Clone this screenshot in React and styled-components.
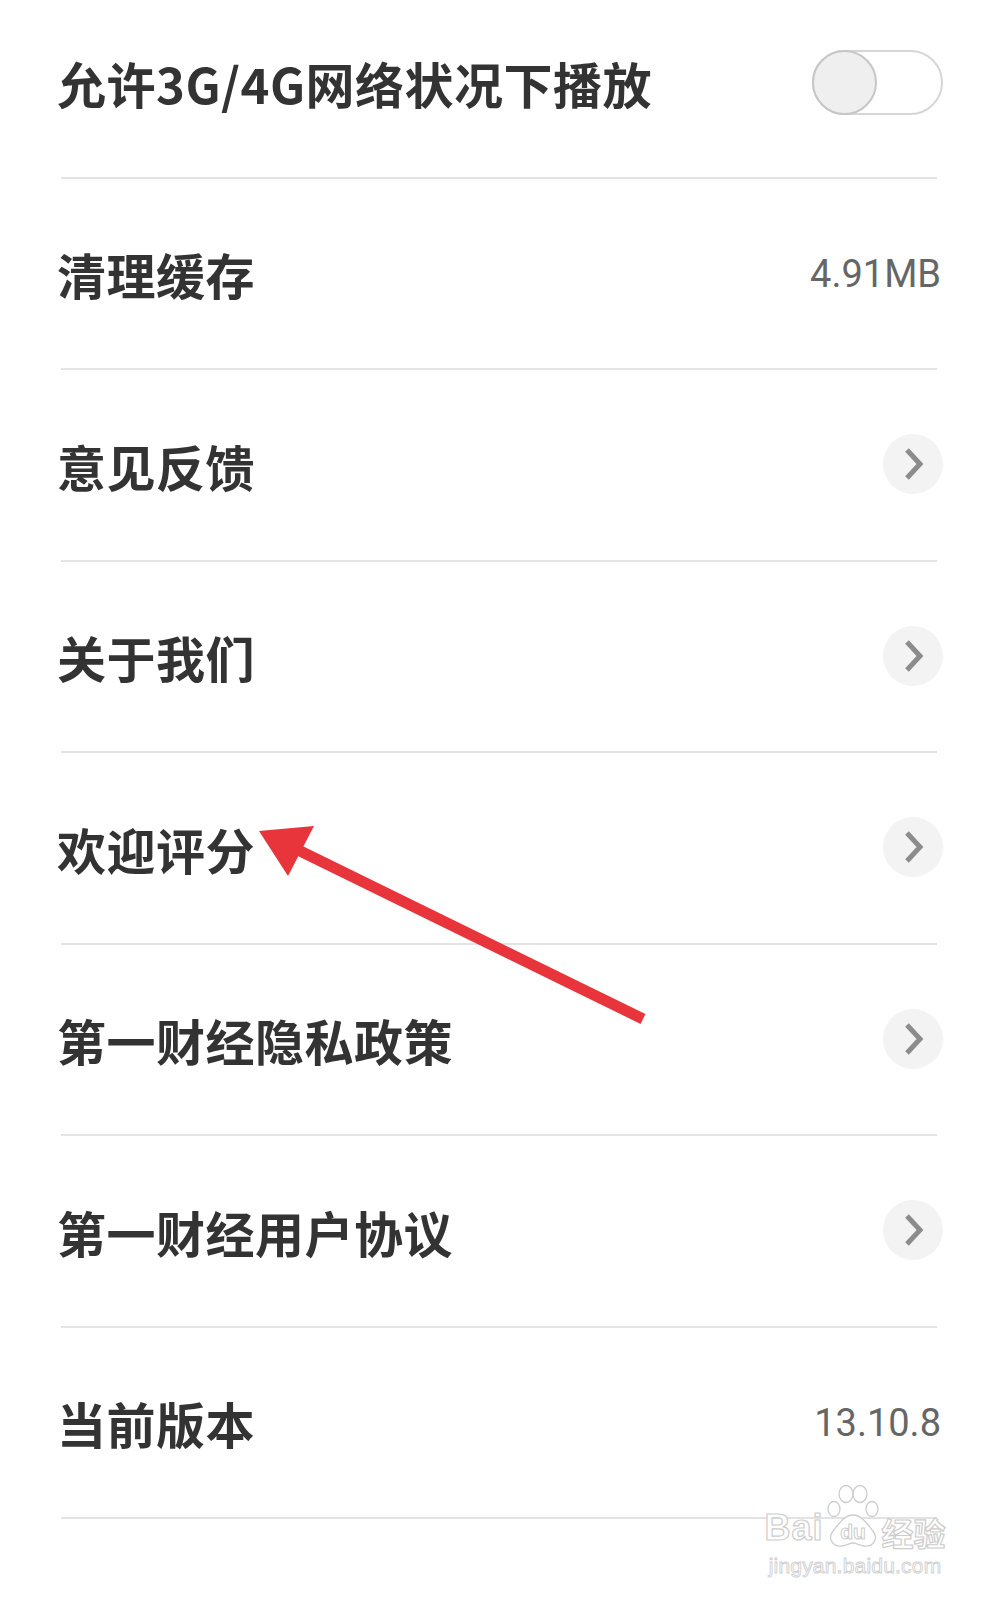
import React from "react"
import styled, { createGlobalStyle } from "styled-components"

const GlobalStyle = createGlobalStyle`
    html, body {
        margin: 0;
        padding: 0;
        background: #ffffff;
    }
    body {
        font-family: "Noto Sans CJK SC", "Noto Sans", sans-serif;
    }
`

const Page = styled.div`
    position: relative;
    width: 999px;
    height: 1600px;
    overflow: hidden;
    background: #fff;
`
const List = styled.div`
    display: flex;
    flex-direction: column;
    padding: 0 56px 0 57px;
`
const Row = styled.div`
    display: flex;
    align-items: center;
    justify-content: space-between;
    height: ${({ h }) => h}px;
    padding-top: ${({ shift }) => shift || 0}px;
    padding-bottom: ${({ lift }) => lift || 0}px;
    box-sizing: border-box;
`
const Label = styled.span`
    font-family: "Noto Sans CJK SC", sans-serif;
    font-weight: 700;
    font-size: 49px;
    color: #333;
    letter-spacing: 0.5px;
    line-height: 1;
`
const Value = styled.span`
    font-family: Roboto, "Liberation Sans", sans-serif;
    font-size: 38px;
    color: #666;
    line-height: 1;
    margin-right: 2px;
`
const Divider = styled.div`
    height: 2px;
    background: #e3e3e3;
    margin: 0 6px 0 4px;
`
const Toggle = styled.div`
    display: flex;
    align-items: center;
    width: 131px;
    height: 65px;
    box-sizing: border-box;
    border: 2px solid #d6d6d6;
    border-radius: 33px;
    background: #fff;
    margin-top: 0;
`
const Knob = styled.div`
    width: 65px;
    height: 65px;
    box-sizing: border-box;
    margin-left: -2px;
    border-radius: 50%;
    border: 2px solid #c6c6c6;
    background: #efefef;
`
const ChevronCircle = styled.div`
    display: flex;
    align-items: center;
    justify-content: center;
    width: 60px;
    height: 60px;
    border-radius: 50%;
    background: #f3f3f3;
    margin-top: -2px;
`
const Overlay = styled.svg`
    position: absolute;
    left: 0;
    top: 0;
    pointer-events: none;
`
const Watermark = styled.div`
    position: absolute;
    left: 764px;
    top: 1484px;
    width: 182px;
    display: flex;
    flex-direction: column;
    align-items: center;
    pointer-events: none;
`
const MarkTop = styled.div`
    display: flex;
    align-items: flex-end;
    gap: 1px;
`
const OutlineText = styled.span`
    font-family: ${({ cjk }) => (cjk ? '"Noto Sans CJK SC", sans-serif' : '"Liberation Sans", Arial, sans-serif')};
    font-weight: 700;
    font-size: ${({ size }) => size}px;
    line-height: 1;
    color: #fff;
    -webkit-text-stroke: 1.2px #cdcdcd;
    letter-spacing: ${({ sp }) => sp || 0}px;
    margin-bottom: ${({ mb }) => mb || 0}px;
`
const MarkUrl = styled.span`
    font-family: "Liberation Sans", Arial, sans-serif;
    font-size: 21px;
    line-height: 1;
    color: #fff;
    -webkit-text-stroke: 0.9px #d0d0d0;
    margin-top: 7px;
    letter-spacing: 0.2px;
`

function Chevron() {
    return (
        <ChevronCircle>
            <svg width="26" height="38" viewBox="0 0 26 38">
                <path d="M7 5 L20 19 L7 33" fill="none" stroke="#8c8c8c" strokeWidth="5" />
            </svg>
        </ChevronCircle>
    )
}

function Paw() {
    return (
        <svg width="56" height="64" viewBox="0 0 56 64">
            <g fill="#fff" stroke="#cdcdcd" strokeWidth="1.3">
                <ellipse cx="9" cy="25" rx="6" ry="7.5" />
                <ellipse cx="21" cy="10" rx="7" ry="8.5" />
                <ellipse cx="35" cy="10" rx="7" ry="8.5" />
                <ellipse cx="47" cy="25" rx="6" ry="7.5" />
                <path d="M28 31 C19 31 13 41 8 47 C2 55 8 63 17 62 C22 61 25 59 28 59 C31 59 34 61 39 62 C48 63 54 55 48 47 C43 41 37 31 28 31 Z" />
            </g>
            <text x="28" y="55" textAnchor="middle" fontFamily="Liberation Sans, Arial, sans-serif" fontWeight="700" fontSize="21" fill="#fff" stroke="#cdcdcd" strokeWidth="1">du</text>
        </svg>
    )
}

const rows = [
    { label: "清理缓存", value: "4.91MB" },
    { label: "意见反馈", chevron: true },
    { label: "关于我们", chevron: true },
    { label: "欢迎评分", chevron: true },
    { label: "第一财经隐私政策", chevron: true },
    { label: "第一财经用户协议", chevron: true },
    { label: "当前版本", value: "13.10.8" },
]

export default function App() {
    return (
        <>
            <GlobalStyle />
            <Page>
                <List>
                    <Row h={176.5} lift={12}>
                        <Label>允许3G/4G网络状况下播放</Label>
                        <Toggle>
                            <Knob />
                        </Toggle>
                    </Row>
                    <Divider />
                    {rows.map((r) => (
                        <React.Fragment key={r.label}>
                            <Row h={189.5} shift={1}>
                                <Label>{r.label}</Label>
                                {r.value && <Value>{r.value}</Value>}
                                {r.chevron && <Chevron />}
                            </Row>
                            <Divider />
                        </React.Fragment>
                    ))}
                </List>

                <Overlay width="999" height="1600" viewBox="0 0 999 1600">
                    <line x1="292" y1="847" x2="643" y2="1019" stroke="#e8353b" strokeWidth="11" />
                    <polygon points="259,831 314,826 288,876" fill="#e8353b" />
                </Overlay>

                <Watermark>
                    <MarkTop>
                        <OutlineText size={36} sp={1} mb={2}>Bai</OutlineText>
                        <Paw />
                        <OutlineText size={32} cjk>经验</OutlineText>
                    </MarkTop>
                    <MarkUrl>jingyan.baidu.com</MarkUrl>
                </Watermark>
            </Page>
        </>
    )
}
